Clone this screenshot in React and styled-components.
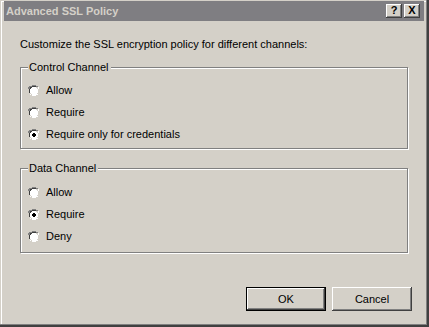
import React from 'react';
import styled, { createGlobalStyle } from 'styled-components';

const GlobalStyle = createGlobalStyle`
  html, body {
    margin: 0;
    padding: 0;
    background: #d4d0c8;
  }
  body {
    font-family: "Liberation Sans", Arial, sans-serif;
    font-size: 11px;
    color: #000;
  }
`;

const Window = styled.div`
  box-sizing: border-box;
  width: 429px;
  height: 327px;
  padding: 1px 5px 5px 4px;
  display: flex;
  flex-direction: column;
  background: #d4d0c8;
  box-shadow: inset -1px -1px #404040, inset -2px -2px #404040, inset -3px -3px #808080,
    inset 1px 1px #d4d0c8, inset 2px 2px #fff;
`;

const TitleBar = styled.div`
  height: 20px;
  display: flex;
  align-items: center;
  padding: 0 4px 0 2px;
  background: #7f7e82;
`;

const Title = styled.span`
  flex: 1;
  font-weight: bold;
  color: #d4d0c8;
  font-size: 11px;
  line-height: 13px;
`;

const CaptionButtons = styled.div`
  display: flex;
  gap: 2px;
`;

const CaptionButton = styled.div`
  box-sizing: border-box;
  width: 16px;
  height: 14px;
  display: flex;
  align-items: center;
  justify-content: center;
  background: #d4d0c8;
  box-shadow: inset -1px -1px #404040, inset 1px 1px #fff, inset -2px -2px #808080;
  font-weight: bold;
  font-size: 11px;
  line-height: 11px;
  padding-bottom: 1px;
`;

const Body = styled.div`
  flex: 1;
  display: flex;
  flex-direction: column;
  padding: 17px 16px 0 16px;
`;

const Intro = styled.p`
  margin: 0 0 16px;
  line-height: 13px;
`;

const Group = styled.section`
  box-sizing: border-box;
  margin: 0 0 ${(p) => p.$gap || 0}px;
  padding: 0 8px ${(p) => p.$bottom}px 7px;
  border: 1px solid #808080;
  box-shadow: inset 1px 1px #fff, 1px 1px #fff;
  display: flex;
  flex-direction: column;
  gap: 9px;
`;

const Legend = styled.div`
  align-self: flex-start;
  margin: -7px 0 ${(p) => p.$after - 9}px 0;
  padding: 0 2px 0 1px;
  height: 13px;
  line-height: 13px;
  background: #d4d0c8;
`;

const Option = styled.label`
  display: flex;
  align-items: center;
  gap: 6px;
  height: 13px;
  line-height: 13px;
`;

const Buttons = styled.div`
  margin-top: auto;
  padding: 0 0 11px 0;
  margin-right: -4px;
  display: flex;
  justify-content: flex-end;
  gap: 6px;
`;

const Button = styled.div`
  box-sizing: border-box;
  width: 80px;
  height: 24px;
  display: flex;
  align-items: center;
  justify-content: center;
  background: #d4d0c8;
  box-shadow: ${(p) =>
    p.$default
      ? 'inset 0 0 0 1px #000, inset -2px -2px #404040, inset 2px 2px #fff, inset -3px -3px #808080'
      : 'inset -1px -1px #404040, inset 1px 1px #fff, inset -2px -2px #808080'};
`;

const Radio = ({ checked }) => (
  <svg width="12" height="12" viewBox="0 0 12 12" shapeRendering="crispEdges">
    <path d="M4 0h4v1h2v1h-6v1h-1v1h-1v4h-1v-4h-1v-2h1v-1h2z" fill="#808080" />
    <path d="M4 1h4v1h-4zM2 2h2v1h-1v1h-1zM1 4h1v4h-1z" fill="#404040" />
    <path d="M11 4v4h-1v2h-2v1h-4v-1h-2v-1h1v1h1v-0h4v-1h2v-1h1v-4zM10 2h1v2h-1z" fill="#fff" />
    <path d="M10 4v4h-1v1h-1v1h-4v-1h4v-1h1v-1h1v-3zM9 2h1v2h-1z" fill="#d4d0c8" />
    <path d="M4 2h4v1h1v1h1v4h-1v1h-1v1h-4v-1h-1v-1h-1v-4h1v-1h1z" fill="#fff" />
    {checked && <path d="M5 4h2v1h1v2h-1v1h-2v-1h-1v-2h1z" fill="#000" />}
  </svg>
);

const groups = [
  {
    name: 'Control Channel',
    after: 10,
    bottom: 7,
    gap: 19,
    options: [
      { label: 'Allow' },
      { label: 'Require' },
      { label: 'Require only for credentials', checked: true },
    ],
  },
  {
    name: 'Data Channel',
    after: 11,
    bottom: 9,
    gap: 0,
    options: [{ label: 'Allow' }, { label: 'Require', checked: true }, { label: 'Deny' }],
  },
];

const App = () => (
  <>
    <GlobalStyle />
    <Window>
      <TitleBar>
        <Title>Advanced SSL Policy</Title>
        <CaptionButtons>
          <CaptionButton>?</CaptionButton>
          <CaptionButton>X</CaptionButton>
        </CaptionButtons>
      </TitleBar>
      <Body>
        <Intro>Customize the SSL encryption policy for different channels:</Intro>
        {groups.map((g) => (
          <Group key={g.name} $gap={g.gap} $bottom={g.bottom}>
            <Legend $after={g.after}>{g.name}</Legend>
            {g.options.map((o) => (
              <Option key={o.label}>
                <Radio checked={o.checked} />
                {o.label}
              </Option>
            ))}
          </Group>
        ))}
        <Buttons>
          <Button $default>OK</Button>
          <Button>Cancel</Button>
        </Buttons>
      </Body>
    </Window>
  </>
);

export default App;
